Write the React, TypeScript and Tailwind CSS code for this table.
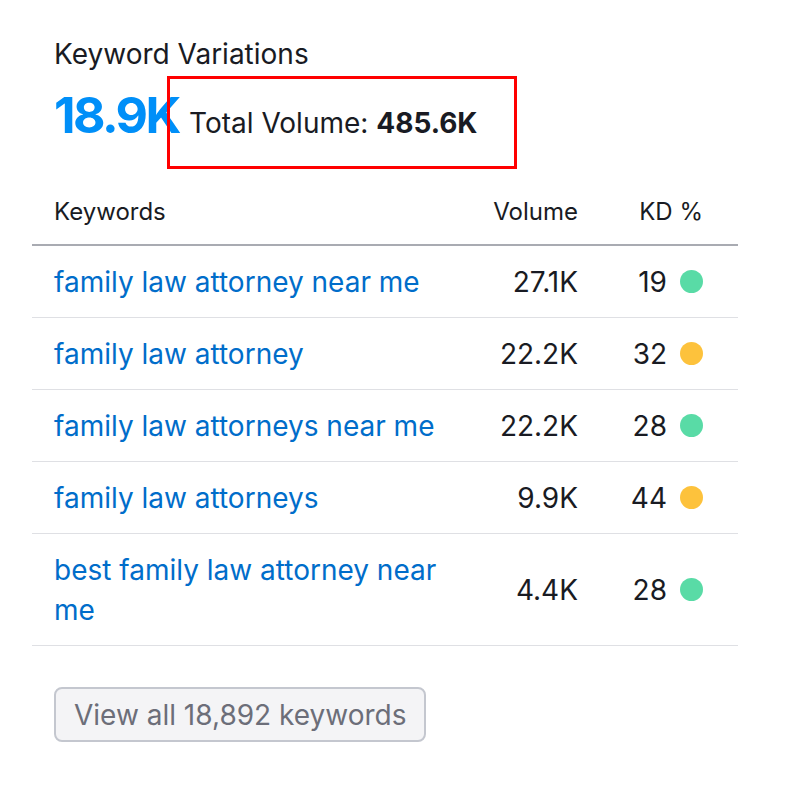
import React from 'react';

interface KeywordRow {
  keyword: string;
  volume: string;
  kd: number;
  level: 'easy' | 'possible';
}

const rows: KeywordRow[] = [
  { keyword: 'family law attorney near me', volume: '27.1K', kd: 19, level: 'easy' },
  { keyword: 'family law attorney', volume: '22.2K', kd: 32, level: 'possible' },
  { keyword: 'family law attorneys near me', volume: '22.2K', kd: 28, level: 'easy' },
  { keyword: 'family law attorneys', volume: '9.9K', kd: 44, level: 'possible' },
  { keyword: 'best family law attorney near me', volume: '4.4K', kd: 28, level: 'easy' },
];

export default function App() {
  return (
    <div className="min-h-[800px] w-[800px] bg-white text-[#191b23] font-['Inter','Liberation_Sans',sans-serif]">
      <div className="w-[706px] ml-[32px] pt-[37px]">
        <div className="pl-[22px]">
          <h2 className="text-[28px] leading-[34px] font-normal">Keyword Variations</h2>
          <div className="relative mt-[16px] flex items-baseline gap-[10px]">
            <span className="text-[50px] leading-[56px] font-bold tracking-[-2.5px] text-[#008ff8]">18.9K</span>
            <span className="text-[28px] leading-[34px]">
              Total Volume: <b className="font-bold">485.6K</b>
            </span>
            {/* annotation box */}
            <div className="absolute left-[113px] top-[-11px] w-[350px] h-[93px] border-[3px] border-[#ff0000]" />
          </div>
        </div>

        {/* header */}
        <div className="mt-[54px] flex items-center pl-[22px] pr-[35px] pb-[17px] border-b-2 border-[#a9abb2] text-[24px] leading-[30px]">
          <div className="flex-1">Keywords</div>
          <div className="w-[120px] text-right">Volume</div>
          <div className="w-[125px] text-right">KD %</div>
        </div>

        {rows.map((r) => (
          <div
            key={r.keyword}
            className="flex items-center pl-[22px] pr-[35px] py-[15.5px] border-b border-[#dfe0e4] text-[28px] leading-[40px]"
          >
            <div className="flex-1 min-w-0">
              <a href="#" className="block max-w-[400px] text-[#006dca]">{r.keyword}</a>
            </div>
            <div className="w-[120px] text-right">{r.volume}</div>
            <div className="w-[125px] flex items-center justify-end gap-[13px]">
              <span>{r.kd}</span>
              <span
                className={`inline-block w-[23px] h-[23px] rounded-full ${
                  r.level === 'easy' ? 'bg-[#59dba6]' : 'bg-[#fdc23c]'
                }`}
              />
            </div>
          </div>
        ))}

        <div className="pl-[22px] mt-[41px]">
          <button className="h-[55px] px-[18px] rounded-[8px] border-2 border-[#c4c7cf] bg-[#f4f4f6] text-[28px] leading-[34px] text-[#6c6e79]">
            View all 18,892 keywords
          </button>
        </div>
      </div>
    </div>
  );
}
